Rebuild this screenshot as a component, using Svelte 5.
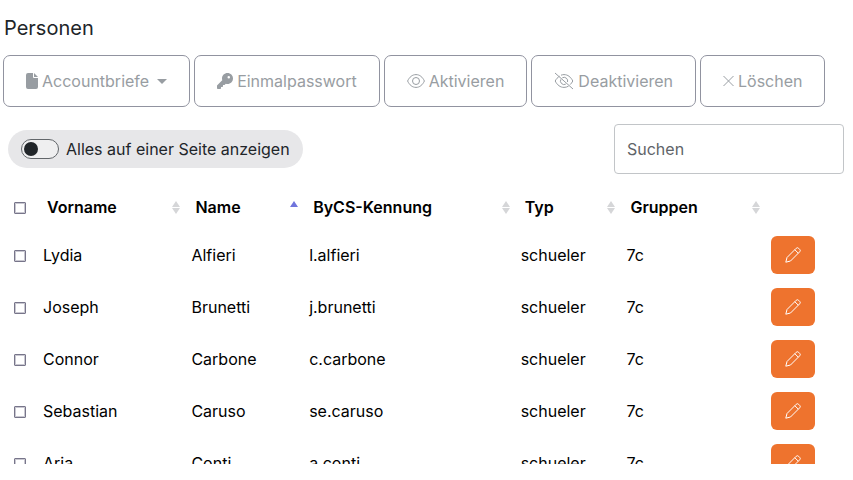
<script>
  const columns = [
    { label: 'Vorname', name: 'first' },
    { label: 'Name', name: 'last', sorted: true },
    { label: 'ByCS-Kennung', name: 'login' },
    { label: 'Typ', name: 'type' },
    { label: 'Gruppen', name: 'groups' },
  ];

  const persons = [
    { first: 'Lydia', last: 'Alfieri', login: 'l.alfieri', type: 'schueler', group: '7c' },
    { first: 'Joseph', last: 'Brunetti', login: 'j.brunetti', type: 'schueler', group: '7c' },
    { first: 'Connor', last: 'Carbone', login: 'c.carbone', type: 'schueler', group: '7c' },
    { first: 'Sebastian', last: 'Caruso', login: 'se.caruso', type: 'schueler', group: '7c' },
    { first: 'Aria', last: 'Conti', login: 'a.conti', type: 'schueler', group: '7c' },
  ];

  let selected = $state([]);
  let showAll = $state(false);
  let search = $state('');

  let allSelected = $derived(selected.length === persons.length);

  function toggleAll() {
    selected = allSelected ? [] : persons.map((p) => p.login);
  }
</script>

<main class="persons">
  <h1>Personen</h1>

  <div class="toolbar">
    <button type="button" disabled={!selected.length}>
      <svg width="12" height="16" viewBox="0 0 12 16" fill="currentColor" aria-hidden="true">
        <path d="M0 2a2 2 0 0 1 2-2h5v4a1 1 0 0 0 1 1h4v9a2 2 0 0 1-2 2H2a2 2 0 0 1-2-2zM8 0l4 4H8z" />
      </svg>
      Accountbriefe
      <span class="caret"></span>
    </button>
    <button type="button" disabled={!selected.length}>
      <svg width="16" height="16" viewBox="0 0 512 512" fill="currentColor" aria-hidden="true">
        <path d="M336 352c97 0 176-79 176-176S433 0 336 0 160 79 160 176c0 19 3 37 8 54L7 391c-4 4-7 11-7 17v80c0 13 11 24 24 24h80c13 0 24-11 24-24v-40h40c13 0 24-11 24-24v-40h40c6 0 12-3 17-7l33-33c17 5 35 8 54 8zM376 96a40 40 0 1 1 0 80 40 40 0 1 1 0-80z" />
      </svg>
      Einmalpasswort
    </button>
    <button type="button" disabled={!selected.length}>
      <svg width="18" height="18" viewBox="0 0 18 18" fill="none" stroke="currentColor" aria-hidden="true">
        <path d="M.6 9C2.5 5 5.300 2.600 9 2.600S15.500 5 17.400 9C15.500 13 12.700 15.400 9 15.400S2.500 13 .6 9z" />
        <circle cx="9" cy="9" r="3.500" />
      </svg>
      Aktivieren
    </button>
    <button type="button" disabled={!selected.length}>
      <svg width="20" height="18" viewBox="0 0 20 18" fill="none" stroke="currentColor" aria-hidden="true">
        <path d="M1 1l18 16M5.600 4.200C3.700 5.300 2.200 7 1.200 9c2 4 5 6.400 8.800 6.400 1.700 0 3.200-.5 4.600-1.300M7 3.200c1-.4 2-.6 3-.6 3.800 0 6.800 2.400 8.800 6.400-.7 1.400-1.600 2.600-2.600 3.600M6.800 7.400a3.600 3.600 0 0 0 5 4.700M8.300 5.800A3.600 3.600 0 0 1 13.500 10" />
      </svg>
      Deaktivieren
    </button>
    <button type="button" disabled={!selected.length}>
      <svg width="11" height="12" viewBox="0 0 11 12" fill="none" stroke="currentColor" aria-hidden="true">
        <path d="M.5 1l10 10M10.500 1l-10 10" />
      </svg>
      Löschen
    </button>
  </div>

  <div class="filters">
    <label class="show-all">
      <input type="checkbox" role="switch" bind:checked={showAll} />
      Alles auf einer Seite anzeigen
    </label>
    <input class="search" type="search" placeholder="Suchen" aria-label="Suchen" bind:value={search} />
  </div>

  <table>
    <thead>
      <tr>
        <th class="check">
          <input type="checkbox" aria-label="Alle auswählen" checked={allSelected} onchange={toggleAll} />
        </th>
        {#each columns as col}
          <th class={col.name} aria-sort={col.sorted ? 'ascending' : 'none'}>
            <div class="head">
              {col.label}
              <span class="sort" class:sorted={col.sorted}></span>
            </div>
          </th>
        {/each}
        <th></th>
      </tr>
    </thead>
    <tbody>
      {#each persons as person}
        <tr>
          <td class="check">
            <input type="checkbox" aria-label="{person.first} {person.last}" value={person.login} bind:group={selected} />
          </td>
          <td>{person.first}</td>
          <td>{person.last}</td>
          <td>{person.login}</td>
          <td>{person.type}</td>
          <td>{person.group}</td>
          <td>
            <button class="edit" type="button" aria-label="Bearbeiten">
              <svg width="16" height="16" viewBox="0 0 16 16" fill="none" stroke="currentColor" stroke-linejoin="round" aria-hidden="true">
                <path d="M.8 15.200l1.200-4.700L11.200 1.300a1.700 1.700 0 0 1 2.400 0l1.100 1.100a1.700 1.700 0 0 1 0 2.400L5.500 14zM9.800 2.700l3.500 3.500" />
              </svg>
            </button>
          </td>
        </tr>
      {/each}
    </tbody>
  </table>
</main>

<style>
  :global(body) { background: #fff; }
  .persons {
    box-sizing: border-box;
    height: calc(100vh - 16px);
    overflow: hidden;
    padding-top: 16px;
    font-family: Inter, "Open Sans", sans-serif;
    font-size: 16px;
    line-height: 24px;
    color: #000;
  }
  h1 { margin: 0 4px 15px; font-size: 20px; font-weight: 400; line-height: 24px; color: #212529; }

  .toolbar { display: flex; flex-wrap: wrap; gap: 4px; padding: 0 3px; }
  .toolbar button {
    display: flex; align-items: center; gap: 4px; padding: 13px 22px;
    border: 1px solid #9193a0; border-radius: 7px; background: #fff;
    font: inherit; color: #989da2; white-space: nowrap;
  }
  .caret { margin-left: 4px; border: 5px solid transparent; border-top-color: currentColor; border-bottom: 0; }

  .filters { display: flex; justify-content: space-between; align-items: center; padding: 17px 9px 0 8px; }
  .show-all {
    display: flex; align-items: center; gap: 7px; padding: 7px 13px;
    border-radius: 20px; background: #e7e7e9; color: #212529;
  }
  .show-all input {
    appearance: none; display: flex; align-items: center; box-sizing: border-box;
    width: 38px; height: 20px; margin: 0; padding: 0 2px;
    border: 1px solid #62666a; border-radius: 10px; background: #efeff0;
  }
  .show-all input::before { content: ''; width: 14px; height: 14px; border-radius: 50%; background: #212529; }
  .show-all input:checked { justify-content: flex-end; }
  .search {
    box-sizing: border-box; width: 230px; height: 50px; margin: 0; padding: 0 12px;
    border: 1px solid #c2c5c8; border-radius: 4px; background: #fff;
    font: inherit; color: #212529;
  }
  .search::placeholder { color: #5f6468; opacity: 1; }

  table { width: 100%; margin-top: 11px; border-collapse: collapse; table-layout: fixed; }
  th, td { box-sizing: border-box; padding: 0 8px; text-align: left; }
  th { height: 44px; font-weight: 600; }
  td { height: 52px; }
  .check { width: 35px; padding: 0 0 0 14px; }
  .first { width: 17.4%; }
  .last { width: 13.8%; }
  .login { width: 24.8%; }
  .type { width: 12.4%; }
  .groups { width: 16.9%; }
  .check input {
    appearance: none; display: block; box-sizing: border-box; width: 12px; height: 12px;
    margin: 2px 0 0; border: 1px solid #77758a; border-radius: 1px; background: #fff;
    box-shadow: inset 0 0 0 1px #c9c8d1;
  }
  .check input:checked { background: #77758a; }
  th:not(.check) { padding: 0 3px 0 12px; }
  .head { display: flex; align-items: center; justify-content: space-between; }

  .sort { display: flex; flex-direction: column; gap: 1px; }
  .sort::before, .sort::after { content: ''; border: 4px solid transparent; }
  .sort::before { border-top: 0; border-bottom: 6px solid #d5d6d8; }
  .sort::after { border-bottom: 0; border-top: 6px solid #d5d6d8; }
  .sorted::before { border-bottom-color: #7074dc; }
  .sorted::after { border-top-color: transparent; }

  .edit {
    display: flex; align-items: center; justify-content: center;
    width: 44px; height: 38px; padding: 0;
    border: 0; border-radius: 6px; background: #ee732e; color: #fff;
  }
</style>
